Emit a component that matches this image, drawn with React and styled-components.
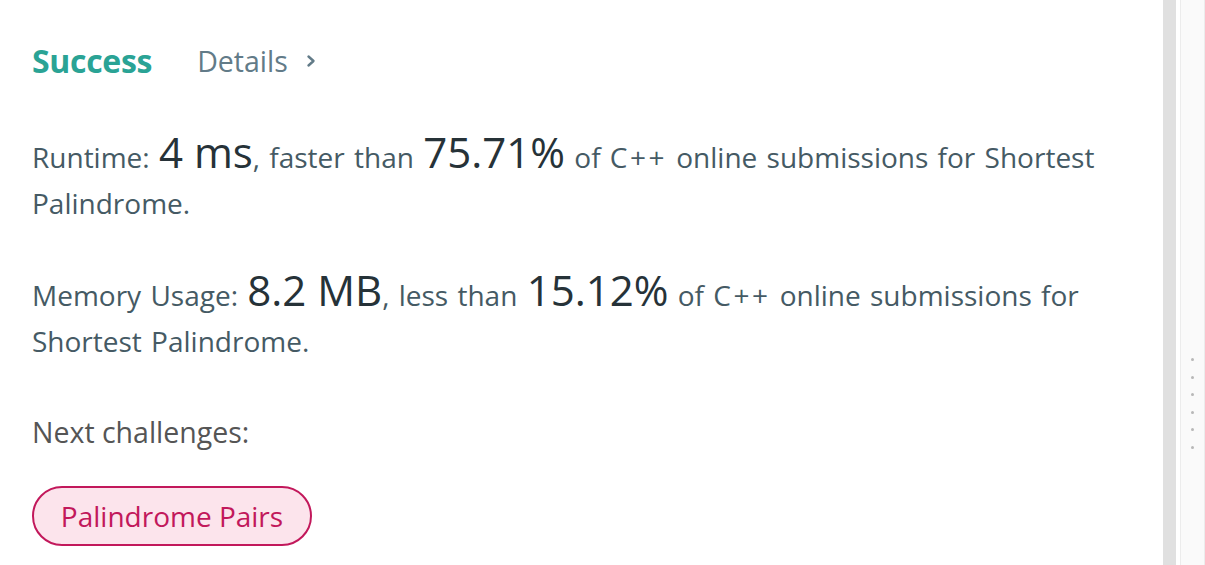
import React from "react";
import styled, { createGlobalStyle } from "styled-components";

const Global = createGlobalStyle`
  html, body { margin: 0; padding: 0; background: #fff; }
  body { font-family: "Open Sans", "Noto Sans", sans-serif; }
`;

const Page = styled.div`
  display: flex;
  height: 565px;
  width: 1205px;
  overflow: hidden;
`;

const Main = styled.main`
  flex: 1;
  padding: 34px 32px 0 32px;
  display: flex;
  flex-direction: column;
  color: #455a64;
`;

const Header = styled.div`
  display: flex;
  align-items: center;
  gap: 45px;
  height: 54px;
`;

const Status = styled.span`
  font-size: 32px;
  font-weight: 700;
  color: #2aa395;
  letter-spacing: -0.3px;
  line-height: 1;
`;

const DetailsLink = styled.a`
  font-size: 28.5px;
  line-height: 1;
  color: #627b88;
  display: flex;
  align-items: center;
  gap: 17px;
  text-decoration: none;
`;

const Para = styled.p`
  margin: ${(p) => p.$top}px 0 0;
  font-size: 28px;
  line-height: 46px;
  word-spacing: 2px;
  color: #455a64;
`;

const Big = styled.span`
  font-size: 42px;
  line-height: 1;
  word-spacing: 0;
  color: #263238;
`;

const Lang = styled.span`
  letter-spacing: 2.5px;
`;

const Label = styled.p`
  margin: 45px 0 0;
  font-size: 28.5px;
  line-height: 46px;
  color: #555;
`;

const Tags = styled.div`
  display: flex;
  margin-top: 31px;
`;

const Tag = styled.a`
  display: inline-flex;
  align-items: center;
  justify-content: center;
  box-sizing: border-box;
  height: 60px;
  width: 280px;
  border: 2px solid #c2185b;
  border-radius: 30px;
  background: #fce4ec;
  color: #c2185b;
  font-size: 28px;
  text-decoration: none;
`;

const Gutter = styled.div`
  width: 13px;
  background: #e0e0e0;
`;

const Spacer = styled.div`
  width: 4px;
  background: #fff;
`;

const SidePanel = styled.aside`
  width: 23px;
  background: #fafafa;
  border-left: 1px solid #ececec;
  border-right: 1px solid #ececec;
  display: flex;
  flex-direction: column;
  align-items: center;
  justify-content: flex-start;
  padding-top: 358px;
  gap: 14.5px;
`;

const Dot = styled.span`
  width: 3px;
  height: 3px;
  border-radius: 50%;
  background: #b8b8b8;
`;

function Chevron() {
  return (
    <svg width="12" height="14" viewBox="0 0 12 14" fill="none">
      <path d="M3.5 2.5 L8.5 7 L3.5 11.5" stroke="#627b88" strokeWidth="2.4" strokeLinecap="round" strokeLinejoin="round" />
    </svg>
  );
}

export default function App() {
  return (
    <>
      <Global />
      <Page>
        <Main>
          <Header>
            <Status>Success</Status>
            <DetailsLink>
              Details <Chevron />
            </DetailsLink>
          </Header>
          <Para $top={43}>
            Runtime: <Big>4 ms</Big>, faster than <Big>75.71%</Big> of <Lang>C++</Lang> online submissions for Shortest Palindrome.
          </Para>
          <Para $top={43}>
            Memory Usage: <Big>8.2 MB</Big>, less than <Big>15.12%</Big> of <Lang>C++</Lang> online submissions for Shortest Palindrome.
          </Para>
          <Label>Next challenges:</Label>
          <Tags>
            <Tag>Palindrome Pairs</Tag>
          </Tags>
        </Main>
        <Gutter />
        <Spacer />
        <SidePanel>
          {Array.from({ length: 6 }).map((_, i) => (
            <Dot key={i} />
          ))}
        </SidePanel>
      </Page>
    </>
  );
}
